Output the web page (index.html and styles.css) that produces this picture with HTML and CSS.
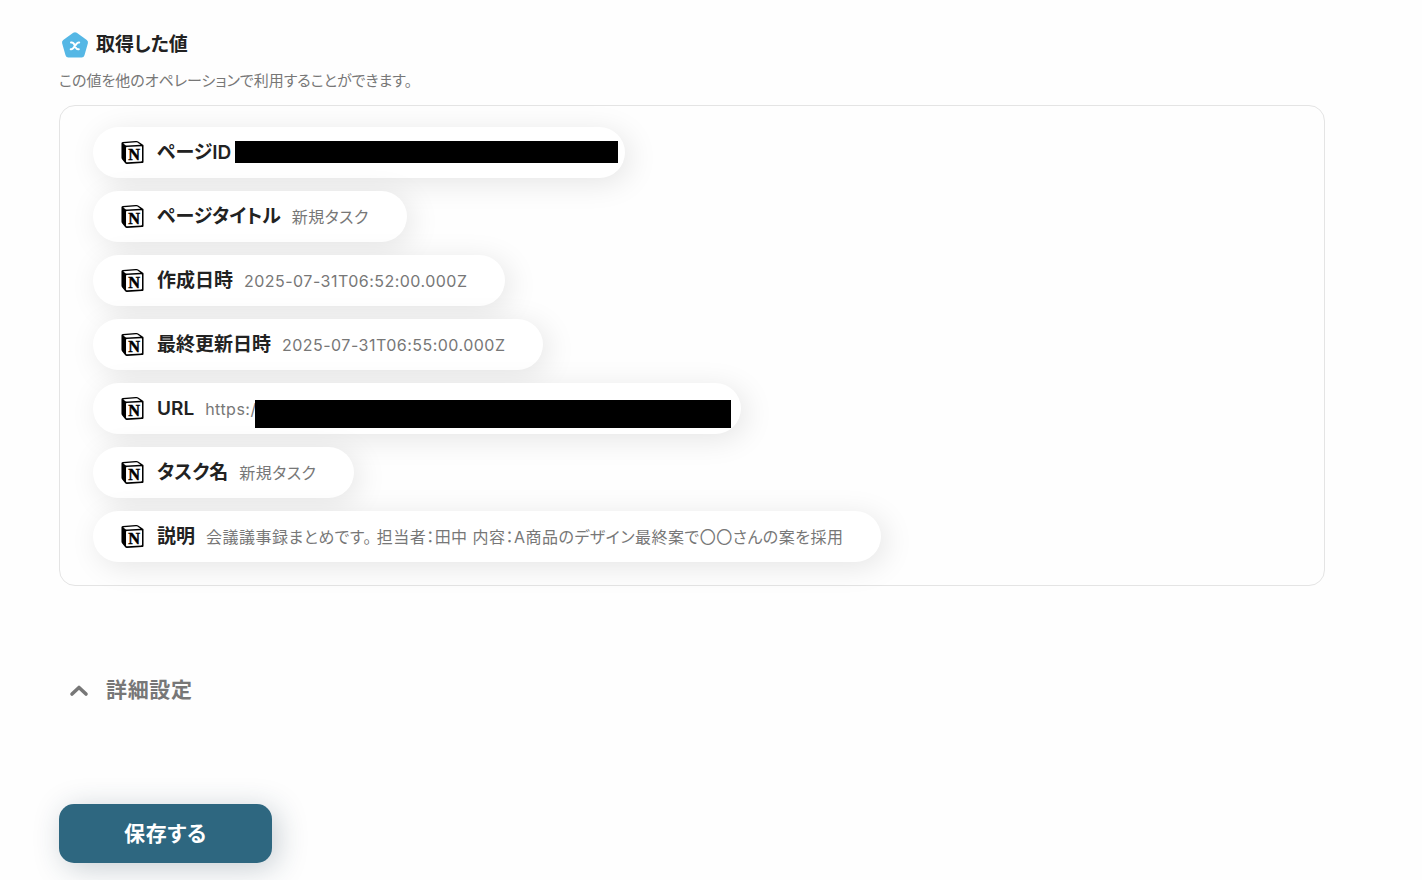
FILE: index.html
```html
<!DOCTYPE html>
<html lang="ja">
<head>
    <meta charset="UTF-8">
    <meta name="viewport" content="width=device-width, initial-scale=1.0">
    <title>取得した値</title>
    <link rel="stylesheet" href="styles.css">
</head>
<body>
    <!-- Shared icon -->
    <svg class="sprite" aria-hidden="true">
        <symbol id="notion" viewBox="0 0 24 24">
            <path fill="#000" d="M1.936 1.035l13.31-.98c1.634-.14 2.055-.047 3.082.7l4.249 2.986c.7.513.934.653.934 1.213v16.378c0 1.026-.373 1.634-1.68 1.726l-15.458.934c-.98.047-1.448-.093-1.962-.747l-3.129-4.06c-.56-.747-.793-1.306-.793-1.96V2.667c0-.839.374-1.54 1.447-1.632z"/>
            <path fill="#fff" d="M4.459 4.208c.746.606 1.026.56 2.428.466l13.215-.793c.28 0 .047-.28-.046-.326L17.86 1.968c-.42-.326-.981-.7-2.055-.607L3.01 2.295c-.466.046-.56.28-.374.466zM5.252 7.288v13.904c0 .747.373 1.027 1.214.98l14.523-.84c.841-.046.935-.56.935-1.167V6.354c0-.606-.233-.933-.748-.887l-15.177.887c-.56.047-.747.327-.747.933z"/>
            <text class="notion-letter" x="13.6" y="19.4" text-anchor="middle">N</text>
        </symbol>
    </svg>

    <main class="container">
        <section>
            <h2 class="section-title">
                <svg class="value-icon" viewBox="0 0 28 28" aria-hidden="true">
                    <path fill="#55b7e5" stroke="#55b7e5" stroke-width="6" stroke-linejoin="round" d="M14 4.2L24 11.5L20.6 23.4H7.4L4 11.5Z"/>
                    <path fill="none" stroke="#fff" stroke-width="2" stroke-linecap="round" d="M10 11.4h.8c1 0 1.6.5 2.1 1.4l2 4c.5.9 1 1.4 2 1.4h.9M18.2 11.4h-.5c-1 0-1.6.6-2.2 1.4l-3 4c-.6.8-1.2 1.4-2.2 1.4h-.6"/>
                </svg>
                取得した値
            </h2>
            <p class="description">この値を他のオペレーションで利用することができます。</p>

            <ul class="value-list">
                <li class="value value-id">
                    <svg class="notion"><use href="#notion"/></svg>
                    <span class="name">ページID</span>
                    <span class="mask"></span>
                </li>
                <li class="value">
                    <svg class="notion"><use href="#notion"/></svg>
                    <span class="name">ページタイトル</span>
                    <span class="content">新規タスク</span>
                </li>
                <li class="value">
                    <svg class="notion"><use href="#notion"/></svg>
                    <span class="name">作成日時</span>
                    <span class="content">2025-07-31T06:52:00.000Z</span>
                </li>
                <li class="value">
                    <svg class="notion"><use href="#notion"/></svg>
                    <span class="name">最終更新日時</span>
                    <span class="content">2025-07-31T06:55:00.000Z</span>
                </li>
                <li class="value value-url">
                    <svg class="notion"><use href="#notion"/></svg>
                    <span class="name">URL</span>
                    <span class="content">https:/</span>
                    <span class="mask"></span>
                </li>
                <li class="value">
                    <svg class="notion"><use href="#notion"/></svg>
                    <span class="name">タスク名</span>
                    <span class="content">新規タスク</span>
                </li>
                <li class="value">
                    <svg class="notion"><use href="#notion"/></svg>
                    <span class="name">説明</span>
                    <span class="content">会議議事録まとめです。 担当者：田中 内容：A商品のデザイン最終案で〇〇さんの案を採用</span>
                </li>
            </ul>
        </section>

        <button type="button" class="toggle">
            <svg class="chevron" viewBox="0 0 20 20" aria-hidden="true"><path d="M3 14L10 7.5L17 14"/></svg>
            詳細設定
        </button>

        <button type="submit" class="save">保存する</button>
    </main>
</body>
</html>
```
FILE: styles.css
```css
:root {
    --text-color: #222222;
    --text-light: #777777;
    --primary-color: #2e6780;
    --border-color: #e4e4e4;
}

* {
    box-sizing: border-box;
}

body {
    margin: 0;
    background-color: #fefefe;
    color: var(--text-color);
    font-family: Inter, "Noto Sans CJK JP", sans-serif;
    font-feature-settings: "palt";
    letter-spacing: 0.03em;
}

button {
    font: inherit;
    font-feature-settings: inherit;
    letter-spacing: 0.03em;
    border: none;
    cursor: pointer;
}

.sprite {
    display: none;
}

.container {
    display: flex;
    flex-direction: column;
    align-items: flex-start;
    padding: 30px 97px 17px 59px;
}

.container section {
    width: 100%;
}

.section-title {
    display: flex;
    align-items: center;
    gap: 7px;
    margin: 0;
    padding-left: 2px;
    font-size: 19px;
    line-height: 30px;
    font-weight: 600;
    letter-spacing: 0;
}

.value-icon {
    width: 28px;
    height: 28px;
}

.description {
    margin: 9px 0 12px;
    font-size: 15px;
    line-height: 24px;
    letter-spacing: 0;
    color: var(--text-light);
}

.value-list {
    display: flex;
    flex-direction: column;
    align-items: flex-start;
    gap: 13px;
    margin: 0;
    padding: 21px 33px 23px;
    list-style: none;
    border: 1px solid var(--border-color);
    border-radius: 16px;
}

.value {
    display: flex;
    align-items: center;
    height: 51px;
    padding: 0 38px 0 28px;
    background-color: #ffffff;
    border-radius: 26px;
    box-shadow: 5px 5px 30px rgba(0, 0, 0, 0.1);
    line-height: 24px;
}

.notion {
    width: 23px;
    height: 23px;
    margin-right: 13px;
}

.notion-letter {
    font-family: "Liberation Serif", serif;
    font-size: 17px;
    font-weight: 700;
    letter-spacing: 0;
    fill: #000000;
    stroke: #000000;
    stroke-width: 0.5;
}

.name {
    font-size: 19px;
    font-weight: 600;
    letter-spacing: 0;
}

.content {
    margin-left: 11px;
    font-size: 16px;
    color: var(--text-light);
}

.mask {
    background-color: #000000;
}

.value-id {
    padding-right: 7px;
}

.value-id .mask {
    width: 383px;
    height: 22px;
    margin: 0 0 1px 4px;
}

.value-url {
    padding-right: 10px;
}

.value-url .mask {
    width: 476px;
    height: 28px;
    margin-top: 11px;
    margin-left: -2px;
}

.toggle {
    display: flex;
    align-items: center;
    gap: 17px;
    margin-top: 88px;
    padding: 0 10px;
    background: none;
    color: var(--text-light);
    font-size: 21px;
    line-height: 32px;
    font-weight: 600;
}

.chevron {
    width: 20px;
    height: 20px;
    fill: none;
    stroke: #777777;
    stroke-width: 3.6;
    stroke-linecap: round;
    stroke-linejoin: round;
}

.save {
    margin-top: 98px;
    padding: 14px 65px;
    background-color: var(--primary-color);
    border-radius: 15px;
    box-shadow: 5px 5px 30px rgba(30, 60, 80, 0.25);
    color: #ffffff;
    font-size: 21px;
    line-height: 31px;
    font-weight: 600;
}
```
